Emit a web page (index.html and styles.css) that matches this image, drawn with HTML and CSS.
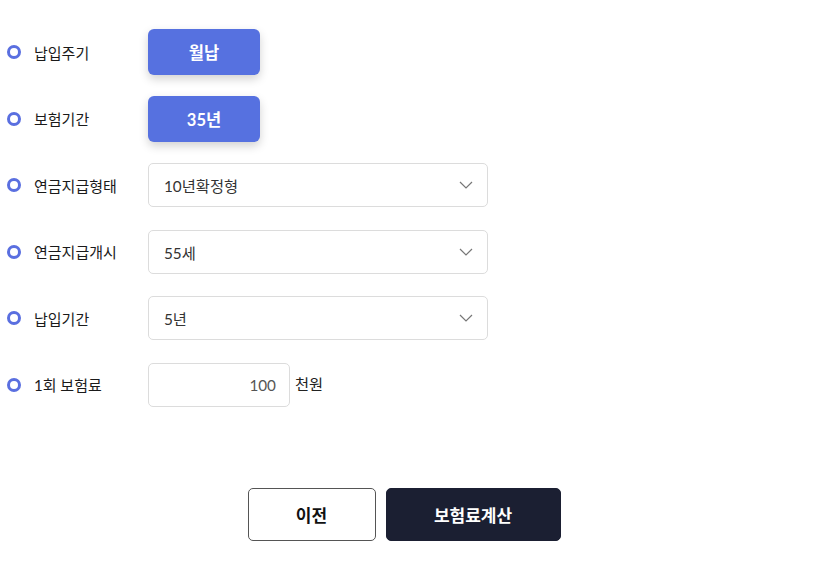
FILE: index.html
```html
<!DOCTYPE html>
<html lang="ko">
<head>
<meta charset="utf-8">
<link rel="stylesheet" href="styles.css">
</head>
<body>
<div class="page">
  <div class="form">
    <div class="row">
      <span class="dot"></span><span class="label">납입주기</span>
      <div class="pill">월납</div>
    </div>
    <div class="row">
      <span class="dot"></span><span class="label">보험기간</span>
      <div class="pill">35년</div>
    </div>
    <div class="row">
      <span class="dot"></span><span class="label">연금지급형태</span>
      <div class="select"><span>10년확정형</span>
        <svg class="chev" width="14" height="8" viewBox="0 0 14 8"><path d="M1 1l6 6 6-6" fill="none" stroke="#777" stroke-width="1.2"/></svg>
      </div>
    </div>
    <div class="row">
      <span class="dot"></span><span class="label">연금지급개시</span>
      <div class="select"><span>55세</span>
        <svg class="chev" width="14" height="8" viewBox="0 0 14 8"><path d="M1 1l6 6 6-6" fill="none" stroke="#777" stroke-width="1.2"/></svg>
      </div>
    </div>
    <div class="row">
      <span class="dot"></span><span class="label">납입기간</span>
      <div class="select"><span>5년</span>
        <svg class="chev" width="14" height="8" viewBox="0 0 14 8"><path d="M1 1l6 6 6-6" fill="none" stroke="#777" stroke-width="1.2"/></svg>
      </div>
    </div>
    <div class="row">
      <span class="dot"></span><span class="label">1회 보험료</span>
      <div class="input">100</div><span class="unit">천원</span>
    </div>
  </div>
  <div class="actions">
    <button class="btn prev">이전</button>
    <button class="btn calc">보험료계산</button>
  </div>
</div>
</body>
</html>
```
FILE: styles.css
```css
html, body {
  margin: 0;
  padding: 0;
  background: #fff;
}
body {
  font-family: Lato, "Noto Sans CJK KR", sans-serif;
  color: #222;
}
.page {
  width: 808px;
  padding-top: 29px;
}
.form {
  display: flex;
  flex-direction: column;
  gap: 20.5px;
}
.row {
  display: flex;
  align-items: center;
  height: 46px;
  padding-left: 7px;
}
.dot {
  width: 8px;
  height: 8px;
  border: 3.5px solid #5a6fe0;
  border-radius: 50%;
  flex: none;
}
.label {
  width: 114px;
  flex: none;
  margin-left: 13px;
  font-size: 15px;
  color: #1a1a1a;
}
.pill {
  width: 112px;
  height: 46px;
  border-radius: 6px;
  background: #5671e0;
  color: #fff;
  font-weight: 700;
  font-size: 16.5px;
  display: flex;
  align-items: center;
  justify-content: center;
  box-shadow: 0 4px 10px rgba(0, 0, 0, 0.18);
}
.select {
  box-sizing: border-box;
  width: 340px;
  height: 44px;
  border: 1px solid #dcdcdc;
  border-radius: 5px;
  display: flex;
  align-items: center;
  justify-content: space-between;
  padding: 0 14px 0 15px;
  font-size: 15.3px;
  color: #333;
}
.chev {
  display: block;
}
.input {
  width: 142px;
  height: 44px;
  box-sizing: border-box;
  border: 1px solid #dcdcdc;
  border-radius: 5px;
  display: flex;
  align-items: center;
  justify-content: flex-end;
  padding-right: 13px;
  font-size: 15.3px;
  color: #555;
}
.unit {
  margin-left: 5px;
  font-size: 15.3px;
  color: #222;
  align-self: flex-start;
  margin-top: 10px;
}
.actions {
  display: flex;
  justify-content: center;
  gap: 10px;
  margin-top: 80px;
}
.btn {
  font-family: Lato, "Noto Sans CJK KR", sans-serif;
  font-weight: 700;
  font-size: 17px;
  height: 53px;
  border-radius: 5px;
  cursor: pointer;
}
.prev {
  width: 128px;
  background: #fff;
  border: 1px solid #555;
  color: #111;
}
.calc {
  width: 175px;
  background: #1b1f32;
  border: 1px solid #1b1f32;
  color: #fff;
}
```
